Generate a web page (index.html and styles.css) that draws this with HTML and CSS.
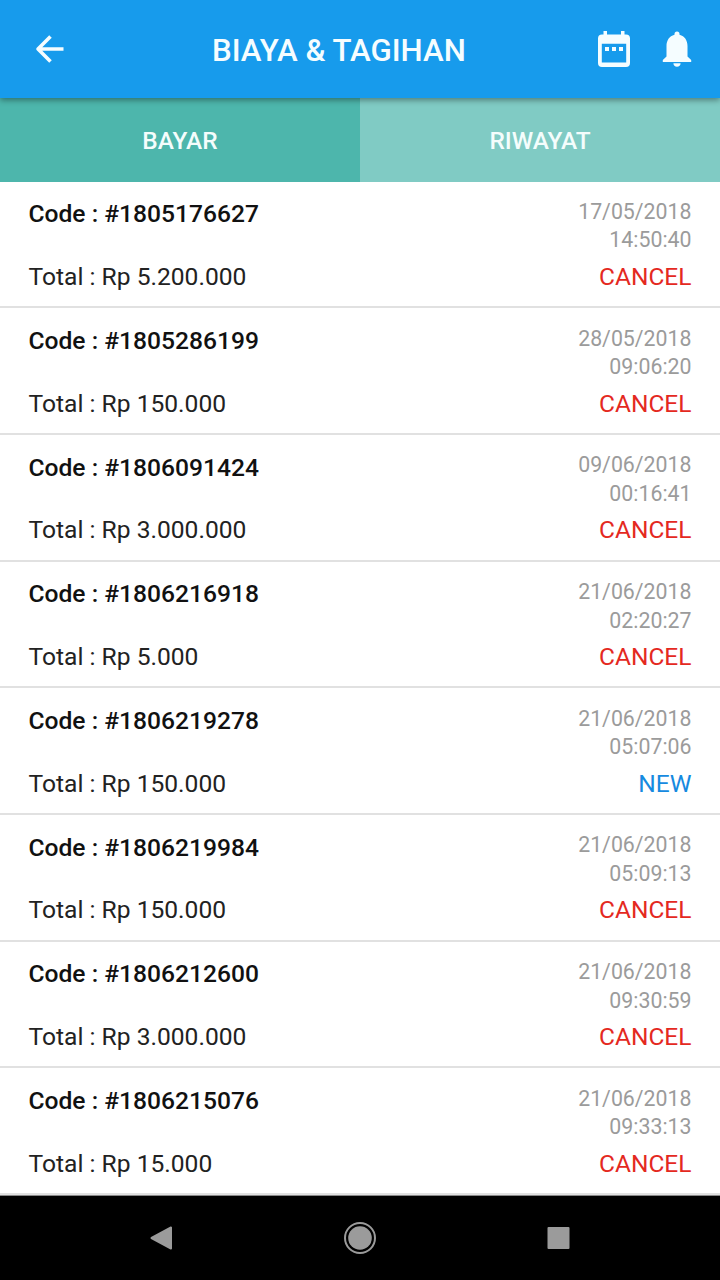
FILE: index.html
```html
<!DOCTYPE html>
<html lang="id">
<head>
<meta charset="utf-8">
<title>Biaya &amp; Tagihan</title>
<link rel="stylesheet" href="styles.css">
</head>
<body>
<div class="screen">
  <header class="appbar">
    <svg class="icon-back" viewBox="0 0 32 32"><path d="M17.500 3.500 5 16l12.500 12.500M5 16h25.500" fill="none" stroke="currentColor" stroke-width="3.6" stroke-linejoin="round"/></svg>
    <h1 class="title">BIAYA &amp; TAGIHAN</h1>
    <svg class="icon-calendar" viewBox="0 0 34 38"><path fill="currentColor" fill-rule="evenodd" d="M6.500 1H10v3.500h14V1h3.500v3.500H29a4 4 0 0 1 4 4V33a4 4 0 0 1-4 4H5a4 4 0 0 1-4-4V8.500a4 4 0 0 1 4-4h1.500zM4.800 13.700v18.800h24.400V13.700zM8 17h4v4H8zm7 0h4v4h-4zm7 0h4v4h-4z"/></svg>
    <svg class="icon-bell" viewBox="0 0 30 36"><path fill="currentColor" d="M12.500 3a2.500 2.500 0 0 1 5 0v.7C22.800 5 25.500 9.500 25.500 15v10.500l3.700 3.500v2H.8v-2l3.700-3.500V15C4.500 9.500 7.200 5 12.500 3.700zM11.400 32.300h7.200c0 2-1.500 3.500-3.600 3.500s-3.600-1.500-3.600-3.500z"/></svg>
  </header>
  <nav class="tabs">
    <div class="tab active">BAYAR</div>
    <div class="tab">RIWAYAT</div>
  </nav>
  <main class="list">
    <article class="bill"><div class="info"><b class="code">Code : #1805176627</b><span class="total">Total : Rp 5.200.000</span></div><div class="meta"><span class="date">17/05/2018</span><span class="date">14:50:40</span><span class="status">CANCEL</span></div></article>
    <article class="bill"><div class="info"><b class="code">Code : #1805286199</b><span class="total">Total : Rp 150.000</span></div><div class="meta"><span class="date">28/05/2018</span><span class="date">09:06:20</span><span class="status">CANCEL</span></div></article>
    <article class="bill"><div class="info"><b class="code">Code : #1806091424</b><span class="total">Total : Rp 3.000.000</span></div><div class="meta"><span class="date">09/06/2018</span><span class="date">00:16:41</span><span class="status">CANCEL</span></div></article>
    <article class="bill"><div class="info"><b class="code">Code : #1806216918</b><span class="total">Total : Rp 5.000</span></div><div class="meta"><span class="date">21/06/2018</span><span class="date">02:20:27</span><span class="status">CANCEL</span></div></article>
    <article class="bill"><div class="info"><b class="code">Code : #1806219278</b><span class="total">Total : Rp 150.000</span></div><div class="meta"><span class="date">21/06/2018</span><span class="date">05:07:06</span><span class="status new">NEW</span></div></article>
    <article class="bill"><div class="info"><b class="code">Code : #1806219984</b><span class="total">Total : Rp 150.000</span></div><div class="meta"><span class="date">21/06/2018</span><span class="date">05:09:13</span><span class="status">CANCEL</span></div></article>
    <article class="bill"><div class="info"><b class="code">Code : #1806212600</b><span class="total">Total : Rp 3.000.000</span></div><div class="meta"><span class="date">21/06/2018</span><span class="date">09:30:59</span><span class="status">CANCEL</span></div></article>
    <article class="bill"><div class="info"><b class="code">Code : #1806215076</b><span class="total">Total : Rp 15.000</span></div><div class="meta"><span class="date">21/06/2018</span><span class="date">09:33:13</span><span class="status">CANCEL</span></div></article>
  </main>
  <footer class="navbar">
    <svg class="nav-icon" viewBox="0 0 36 36"><path d="M8.500 18 28 7.500v21z" fill="#9b9b9b" stroke="#9b9b9b" stroke-width="2" stroke-linejoin="round"/></svg>
    <svg class="nav-icon" viewBox="0 0 36 36"><circle cx="18" cy="18" r="15" fill="none" stroke="#9b9b9b" stroke-width="2"/><circle cx="18" cy="18" r="11.800" fill="#9b9b9b"/></svg>
    <svg class="nav-icon" viewBox="0 0 36 36"><rect x="6.500" y="7" width="22" height="22" rx="1" fill="#9b9b9b"/></svg>
  </footer>
</div>
</body>
</html>
```
FILE: styles.css
```css
* { box-sizing: border-box; }
body { margin: 0; font-family: Roboto, sans-serif; background: #fff; }
.screen { width: 720px; height: 1280px; display: flex; flex-direction: column; overflow: hidden; }
.appbar {
  height: 98px; flex: none; display: grid;
  grid-template-columns: 32px 1fr 34px 30px; column-gap: 0;
  align-items: center; padding: 0 28px 0 33px;
  background: #179bec; color: #f5fdff;
  box-shadow: 0 2px 6px rgba(0, 0, 0, .4); z-index: 1;
}
.icon-back { width: 32px; height: 32px; }
.icon-calendar { width: 34px; height: 38px; margin-left: -31px; }
.icon-bell { width: 30px; height: 36px; }
.title { margin: 4px 0 0; font-size: 31.200px; line-height: 40px; font-weight: 500; padding-left: 147px; white-space: nowrap; }
.tabs { height: 83.600px; flex: none; display: grid; grid-template-columns: 1fr 1fr; }
.tab {
  display: flex; align-items: center; justify-content: center;
  padding-top: 2px; background: #80cbc4; color: #f4fdfc;
  font-size: 24.400px; font-weight: 500;
}
.active { background: #4db6ac; }
.list { flex: none; }
.bill {
  height: 126.700px; display: flex; justify-content: space-between;
  padding: 15.600px 28.500px 0; border-bottom: 2px solid #e1e1e1;
}
.info, .meta { display: flex; flex-direction: column; }
.meta { align-items: flex-end; }
.code { font-size: 24.600px; line-height: 34px; font-weight: 500; color: #111; }
.total { font-size: 24.600px; line-height: 34px; margin-top: 28.800px; color: #222; }
.date { font-size: 21.300px; line-height: 28.600px; color: #9b9b9b; position: relative; top: .7px; }
.status { font-size: 24.500px; line-height: 34px; margin-top: 5.600px; color: #e4291f; }
.new { color: #168ae0; }
.navbar {
  flex: 1; display: flex; justify-content: space-between; align-items: center;
  padding: 0 143px; background: #000; border-top: 1px solid #888;
}
.nav-icon { width: 36px; height: 36px; }
```
